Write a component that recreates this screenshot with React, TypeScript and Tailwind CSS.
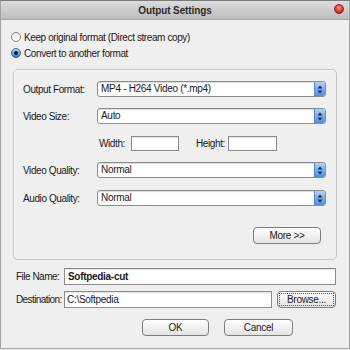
import React from "react";

const font = { fontFamily: '"Liberation Sans", Arial, sans-serif' };

function Arrows() {
  return (
    <svg width="6" height="9" viewBox="0 0 6 9">
      <path d="M3 0.5 L5.5 3.5 L0.5 3.5 Z" fill="#1c2a4a" />
      <path d="M3 8.5 L5.5 5.5 L0.5 5.5 Z" fill="#1c2a4a" />
    </svg>
  );
}

function Select({ value }: { value: string }) {
  return (
    <div className="flex h-[16px] w-[229px] rounded-[3px] border border-[#8c8c8c] bg-white overflow-hidden shadow-[inset_0_1px_1px_rgba(0,0,0,0.15)]">
      <div className="flex-1 pl-[3px] text-[10px] leading-[14px] tracking-[-0.3px] text-[#1a1a1a]">{value}</div>
      <div className="w-[11px] flex items-center justify-center bg-gradient-to-b from-[#b5d2f5] via-[#7eaee9] to-[#4f8ce0] border-l border-[#5a84c0]">
        <Arrows />
      </div>
    </div>
  );
}

function Button({ label, w, focus }: { label: string; w: string; focus?: boolean }) {
  return (
    <div
      className={`${w} h-[17px] rounded-[4px] border border-[#7d7d7d] bg-gradient-to-b from-[#ffffff] to-[#e4e4e4] flex items-center justify-center p-[1px]`}
    >
      <div
        className={`w-full h-full flex items-center justify-center text-[10px] tracking-[-0.3px] text-[#1a1a1a] ${focus ? "border border-dotted border-[#555]" : ""}`}
      >
        {label}
      </div>
    </div>
  );
}

function Radio({ checked }: { checked?: boolean }) {
  if (checked)
    return (
      <div className="w-[10px] h-[10px] rounded-full border border-[#3b5f96] bg-gradient-to-b from-[#b8d4f6] to-[#3a78d0] flex items-center justify-center">
        <div className="w-[4px] h-[4px] rounded-full bg-[#0d1a33]" />
      </div>
    );
  return <div className="w-[10px] h-[10px] rounded-full border border-[#8a8a8a] bg-gradient-to-b from-[#e8e8e8] to-white" />;
}

export default function App() {
  return (
    <div style={font} className="w-[350px] h-[350px] bg-[#efefef] flex flex-col text-[#1a1a1a] overflow-hidden">
      <div className="w-[350px] h-[349px] border border-[#a3a3a3] border-t-[#7a7a7a] flex flex-col">
        {/* title bar */}
        <div className="relative h-[19px] bg-gradient-to-b from-[#dcdcdc] to-[#bdbdbd] border-b border-[#a8a8a8] flex items-center justify-center">
          <span className="text-[10px] font-bold text-[#2a2a2a] tracking-[-0.1px]">Output Settings</span>
          <div className="absolute right-[5px] top-[3px] w-[10px] h-[10px] rounded-full border border-[#8a2020] bg-[radial-gradient(circle_at_50%_35%,#ff9a9a_0%,#e83030_55%,#a81010_100%)]" />
        </div>

        {/* radios */}
        <div className="pt-[9px] pl-[10px] flex flex-col">
          <div className="h-[16px] flex items-center gap-[3px]">
            <Radio />
            <span className="text-[10px] tracking-[-0.4px]">Keep original format (Direct stream copy)</span>
          </div>
          <div className="h-[16px] flex items-center gap-[3px]">
            <Radio checked />
            <span className="text-[10px] tracking-[-0.4px]">Convert to another format</span>
          </div>
        </div>

        {/* group box */}
        <div className="ml-[12px] mt-[8px] w-[324px] h-[191px] rounded-[5px] border border-[#c4c4c4] shadow-[inset_1px_1px_0_#fafafa] flex flex-col pl-[9px] pt-[11px]">
          <div className="flex items-center h-[16px]">
            <span className="w-[74px] text-[10px] tracking-[-0.4px]">Output Format:</span>
            <Select value="MP4 - H264 Video (*.mp4)" />
          </div>
          <div className="flex items-center h-[16px] mt-[11px]">
            <span className="w-[74px] text-[10px] tracking-[-0.4px]">Video Size:</span>
            <Select value="Auto" />
          </div>
          <div className="flex items-center h-[15px] mt-[12px]">
            <span className="ml-[76px] w-[32px] text-[10px] tracking-[-0.4px]">Width:</span>
            <div className="w-[48px] h-[15px] border border-[#8c8c8c] bg-white shadow-[inset_0_1px_1px_rgba(0,0,0,0.12)]" />
            <span className="ml-[17px] w-[32px] text-[10px] tracking-[-0.4px]">Height:</span>
            <div className="w-[49px] h-[15px] border border-[#8c8c8c] bg-white shadow-[inset_0_1px_1px_rgba(0,0,0,0.12)]" />
          </div>
          <div className="flex items-center h-[16px] mt-[11px]">
            <span className="w-[74px] text-[10px] tracking-[-0.4px]">Video Quality:</span>
            <Select value="Normal" />
          </div>
          <div className="flex items-center h-[16px] mt-[12px]">
            <span className="w-[74px] text-[10px] tracking-[-0.4px]">Audio Quality:</span>
            <Select value="Normal" />
          </div>
          <div className="flex justify-end mt-[21px] pr-[15px]">
            <Button label="More >>" w="w-[68px]" />
          </div>
        </div>

        {/* file name */}
        <div className="flex items-center mt-[8px] pl-[15px] h-[17px]">
          <span className="w-[48px] text-[10px] tracking-[-0.5px]">File Name:</span>
          <div className="w-[272px] h-[17px] border border-[#8c8c8c] bg-white flex items-center pl-[3px] shadow-[inset_0_1px_1px_rgba(0,0,0,0.12)]">
            <span className="text-[10px] font-bold tracking-[-0.3px]">Softpedia-cut</span>
          </div>
        </div>
        <div className="flex items-center mt-[6px] pl-[15px] h-[17px]">
          <span className="w-[48px] text-[10px] tracking-[-0.6px] whitespace-nowrap">Destination:</span>
          <div className="w-[208px] h-[17px] border border-[#8c8c8c] bg-white flex items-center pl-[2px] shadow-[inset_0_1px_1px_rgba(0,0,0,0.12)]">
            <span className="text-[10px] tracking-[-0.3px]">C:\Softpedia</span>
          </div>
          <div className="ml-[5px]">
            <Button label="Browse..." w="w-[59px]" focus />
          </div>
        </div>
        <div className="flex mt-[11px] pl-[141px] gap-[15px]">
          <Button label="OK" w="w-[67px]" />
          <Button label="Cancel" w="w-[69px]" />
        </div>
      </div>
    </div>
  );
}
